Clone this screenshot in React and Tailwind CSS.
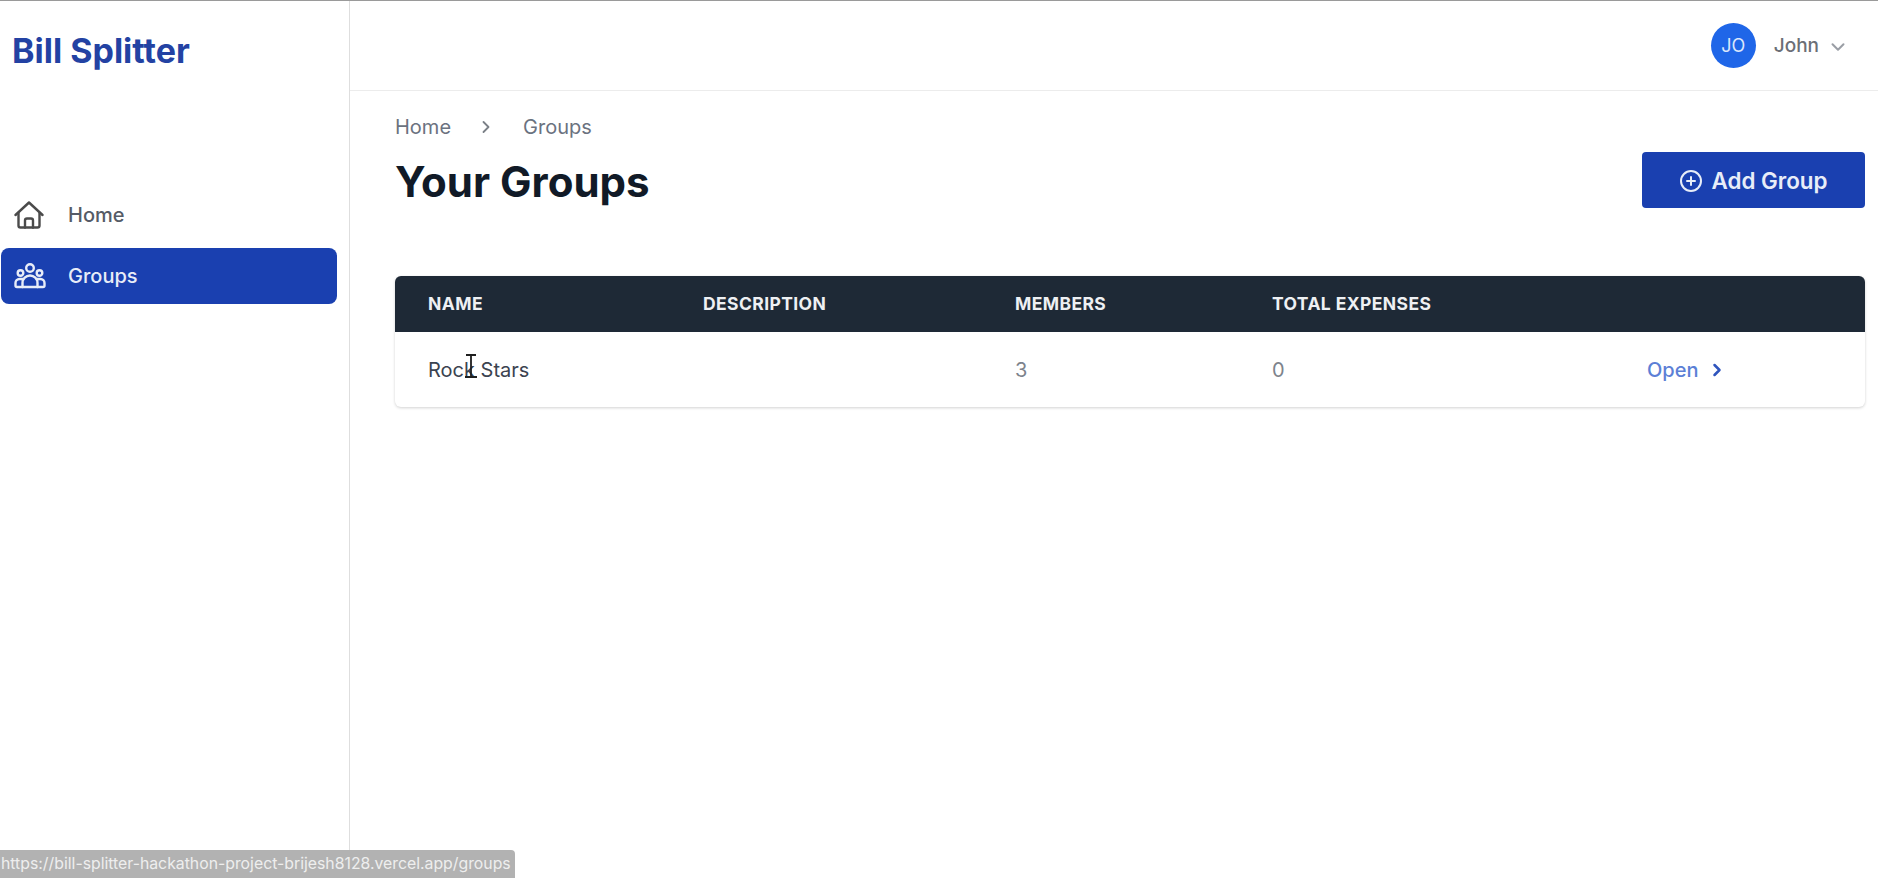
import React from 'react';
import { ChevronDown, ChevronRight, CirclePlus } from 'lucide-react';

const HomeIcon = () => (
  <svg width="30" height="28" viewBox="0 0 30 28" fill="none" stroke="#4b4b4b" strokeWidth="2.4" strokeLinecap="round" strokeLinejoin="round">
    <path d="M1.5 14 L15 1.5 L28.5 14" />
    <path d="M4.5 12 V24.5 a2 2 0 0 0 2 2 H23.5 a2 2 0 0 0 2 -2 V12" />
    <path d="M11 26.5 V19.5 a2 2 0 0 1 2 -2 H17 a2 2 0 0 1 2 2 V26.5" />
  </svg>
);

const GroupsIcon = () => (
  <svg width="32" height="26" viewBox="0 0 32 26" fill="none" stroke="#e8edf8" strokeWidth="2.4" strokeLinecap="round" strokeLinejoin="round">
    <circle cx="16" cy="5" r="3.8" />
    <circle cx="6.5" cy="10" r="2.8" />
    <circle cx="25.5" cy="10" r="2.8" />
    <path d="M8.5 24 V20 a7.5 7.5 0 0 1 15 0 V24" />
    <path d="M9 16 H5.5 a4 4 0 0 0 -4 4 V22.5 a1.5 1.5 0 0 0 1.5 1.5 H29 a1.5 1.5 0 0 0 1.5 -1.5 V20 a4 4 0 0 0 -4 -4 H23" />
  </svg>
);

const TextCursor = () => (
  <svg width="14" height="24" viewBox="0 0 14 24" fill="none" stroke="#1f1f1f" strokeWidth="1.8">
    <path d="M2 1 H12 M7 1 V23 M1 23 H13" />
  </svg>
);

const App = () => {
  return (
    <div className="relative flex h-[878px] w-[1878px] overflow-hidden bg-white font-['Inter',sans-serif] border-t border-[#9a9a9a]">
      <aside className="flex w-[350px] shrink-0 flex-col border-r border-[#dedede] pl-px pr-[12px]">
        <div className="pl-[11px] pt-[28px] text-[34px] leading-[44px] font-bold text-[#2342a3]">Bill Splitter</div>
        <nav className="mt-[114px] flex flex-col gap-[5px]">
          <a className="flex h-[56px] items-center rounded-lg pl-[13px] text-[20px] font-medium text-[#555b66]">
            <span className="flex w-[54px]"><HomeIcon /></span>
            Home
          </a>
          <a className="flex h-[56px] items-center rounded-lg bg-[#1a40b0] pl-[13px] text-[20px] font-medium text-[#e8edf8]">
            <span className="flex w-[54px]"><GroupsIcon /></span>
            Groups
          </a>
        </nav>
      </aside>

      <main className="flex min-w-0 flex-1 flex-col">
        <header className="flex h-[90px] shrink-0 items-center justify-end border-b border-[#ececec] pr-[29px]">
          <div className="flex h-[45px] w-[45px] items-center justify-center rounded-full bg-[#1f66e8] text-[18px] text-[#dbe6fb]">JO</div>
          <span className="ml-[18px] mt-[2px] text-[19px] font-medium text-[#6b6f76]">John</span>
          <ChevronDown size={22} strokeWidth={2.2} className="ml-[8px] mt-[2px] text-[#9a9ea5]" />
        </header>

        <div className="flex flex-col pl-[45px] pr-[13px]">
          <div className="mt-[23px] flex h-[26px] items-center text-[20px] text-[#6b7280]">
            <span>Home</span>
            <ChevronRight size={20} strokeWidth={2.2} className="ml-[25px] mr-[27px] text-[#7b8087]" />
            <span>Groups</span>
          </div>

          <div className="mt-[12px] flex items-start justify-between">
            <h1 className="mt-[4px] text-[42px] leading-[52px] font-bold text-[#111a27]">Your Groups</h1>
            <button className="flex h-[56px] w-[223px] items-center justify-center gap-[8px] rounded bg-[#1a40b0] pt-px text-[22.4px] font-semibold text-[#e8edf8]">
              <CirclePlus size={24} strokeWidth={2} />
              Add Group
            </button>
          </div>

          <div className="mt-[68px] rounded-md bg-white shadow-[0_1px_3px_rgba(0,0,0,0.18)]">
            <div className="flex h-[56px] items-center rounded-t-md bg-[#1e2936] pl-[33px] text-[17.5px] font-bold tracking-[0.4px] text-[#eef0f3]">
              <span className="w-[275px]">NAME</span>
              <span className="w-[312px]">DESCRIPTION</span>
              <span className="w-[257px]">MEMBERS</span>
              <span>TOTAL EXPENSES</span>
            </div>
            <div className="relative flex h-[75px] items-center pl-[33px] pt-px text-[20px]">
              <span className="w-[587px] text-[#3b4350]">Rock Stars</span>
              <span className="w-[257px] text-[#7d838c]">3</span>
              <span className="w-[375px] text-[#7d838c]">0</span>
              <a className="flex items-center gap-[9px] font-medium text-[#5c7fd6]">
                Open
                <ChevronRight size={20} strokeWidth={3} className="text-[#2f55bd]" />
              </a>
              <span className="absolute left-[69px] top-[22px]"><TextCursor /></span>
            </div>
          </div>
        </div>
      </main>

      <div className="absolute bottom-0 left-0 flex h-[28px] w-[515px] items-center overflow-hidden whitespace-nowrap rounded-tr bg-[#b2b2b2] pl-px text-[15.8px] text-[#eeeeee]">
        https://bill-splitter-hackathon-project-brijesh8128.vercel.app/groups
      </div>
    </div>
  );
};

export default App;
